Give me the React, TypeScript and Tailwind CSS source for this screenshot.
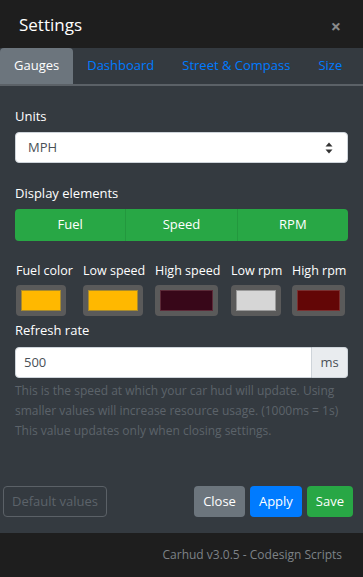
import { useState } from "react";

const tabs = ["Gauges", "Dashboard", "Street & Compass", "Size"];

const colors = [
  { label: "Fuel color", value: "#ffb800", border: "#a78a2e", col: "w-[67px]", w: "w-[50px]" },
  { label: "Low speed", value: "#ffb800", border: "#a78a2e", col: "w-[72px]", w: "w-[60px]" },
  { label: "High speed", value: "#380719", border: "#5c2a38", col: "w-[76px]", w: "w-[63px]" },
  { label: "Low rpm", value: "#d6d6d6", border: "#9a9a9a", col: "w-[61px]", w: "w-[50px]" },
  { label: "High rpm", value: "#630606", border: "#7a3030", col: "w-[54px]", w: "w-[53px]" },
];

export default function App() {
  const [activeTab, setActiveTab] = useState("Gauges");
  const [refreshRate, setRefreshRate] = useState("500");

  return (
    <div className="flex h-[577px] w-[363px] flex-col bg-[#343a40] font-['Open_Sans',sans-serif] text-[13px] text-white">
      <header className="flex h-12 items-center justify-between bg-[#1e1e1e] pl-[19px] pr-[22px]">
        <h1 className="text-[17px] leading-none">Settings</h1>
        <button className="mt-1 text-[18px] font-bold leading-none text-[#8a8a8a]">×</button>
      </header>

      <nav className="flex h-[38px] overflow-hidden border-b-2 border-[#5b6167]">
        {tabs.map((tab) => (
          <button
            key={tab}
            onClick={() => setActiveTab(tab)}
            className={
              tab === activeTab
                ? "whitespace-nowrap rounded-t bg-[#6c757d] px-[14px] text-[13px] text-white"
                : "whitespace-nowrap px-[14px] text-[13px] text-[#007bff]"
            }
          >
            {tab}
          </button>
        ))}
      </nav>

      <main className="flex flex-1 flex-col px-[15px] pt-5">
        <label className="block">
          <span className="block leading-5">Units</span>
          <div className="mt-[6px] flex h-[31px] items-center justify-between rounded border border-[#ced4da] bg-white pl-3 pr-[14px] text-[#495057]">
            <span className="text-[13px]">MPH</span>
            <svg width="8" height="12" viewBox="0 0 8 12" fill="#333">
              <path d="M4 0.5 L7.5 4.5 H0.5 Z" />
              <path d="M4 11.5 L7.5 7.5 H0.5 Z" />
            </svg>
          </div>
        </label>

        <div className="mt-5">
          <span className="block leading-5">Display elements</span>
          <div className="mt-[6px] flex h-[32px] overflow-hidden rounded">
            <button className="flex-1 bg-[#28a745] text-[13px]">Fuel</button>
            <button className="flex-1 border-x border-[#23983e] bg-[#28a745] text-[13px]">Speed</button>
            <button className="flex-1 bg-[#28a745] text-[13px]">RPM</button>
          </div>
        </div>

        <div className="mt-5 flex pl-px">
          {colors.map((c) => (
            <div key={c.label} className={`flex ${c.col} flex-col`}>
              <span className="whitespace-nowrap text-[12.5px] leading-5">{c.label}</span>
              <div className={`mt-[4px] h-[31px] ${c.w} rounded-[4px] bg-[#5a5a5a] p-[5px]`}>
                <div
                  className="h-full w-full border"
                  style={{ backgroundColor: c.value, borderColor: c.border }}
                />
              </div>
            </div>
          ))}
        </div>

        <div className="mt-1">
          <span className="block leading-5">Refresh rate</span>
          <div className="mt-[7px] flex h-[31px]">
            <input
              value={refreshRate}
              onChange={(e) => setRefreshRate(e.target.value)}
              className="min-w-0 flex-1 rounded-l border border-[#ced4da] bg-white px-2 text-[13px] text-[#495057] outline-none"
            />
            <span className="flex w-[36px] items-center justify-center rounded-r border border-l-0 border-[#ced4da] bg-[#e9ecef] text-[13px] text-[#495057]">
              ms
            </span>
          </div>
          <p className="mt-[3px] text-[12px] leading-5 text-[#5c636a]">
            This is the speed at which your car hud will update. Using smaller values will increase resource usage. (1000ms = 1s) This value updates only when closing settings.
          </p>
        </div>

        <div className="mt-auto mb-4 flex items-center justify-between">
          <button className="-ml-3 h-[31px] rounded border border-[#5b6167] px-2 text-[13px] text-[#5c636a]">
            Default values
          </button>
          <div className="-mr-[5px] flex gap-[5px]">
            <button className="h-[31px] rounded bg-[#6c757d] px-[9px] text-[13px]">Close</button>
            <button className="h-[31px] rounded bg-[#007bff] px-[9px] text-[13px]">Apply</button>
            <button className="h-[31px] rounded bg-[#28a745] px-[9px] text-[13px]">Save</button>
          </div>
        </div>
      </main>

      <footer className="flex h-[44px] items-center justify-end bg-[#1e1e1e] pr-[21px] text-[12px] text-[#7d8287]">
        Carhud v3.0.5 - Codesign Scripts
      </footer>
    </div>
  );
}
